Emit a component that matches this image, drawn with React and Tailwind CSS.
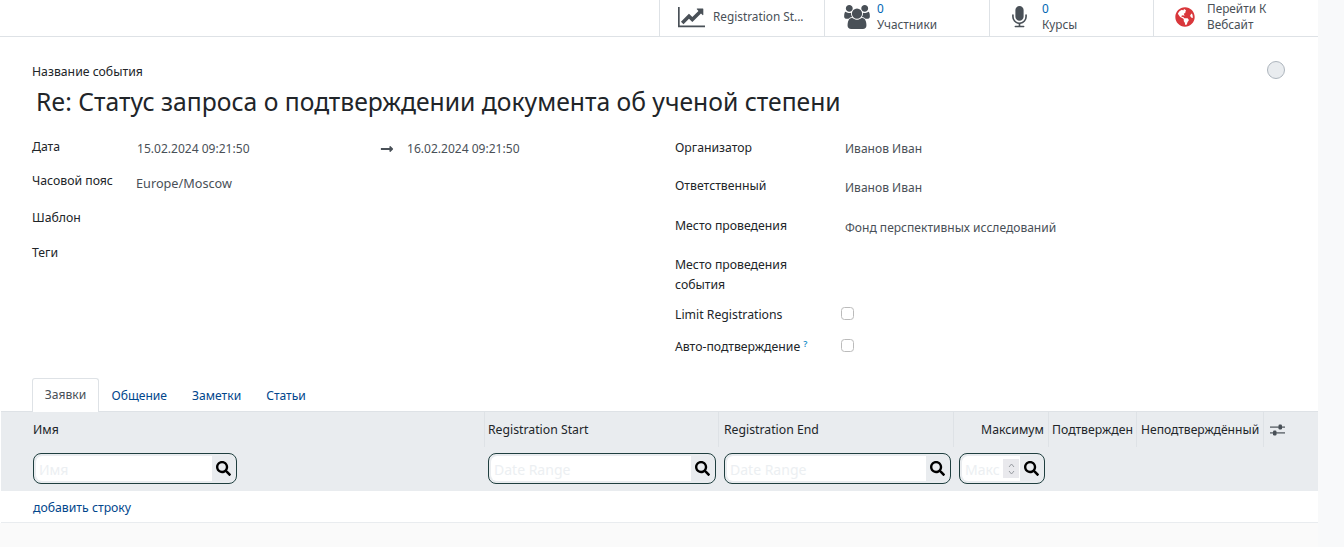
import React from "react";
import { FaSearch, FaGlobeAmericas, FaLongArrowAltRight } from "react-icons/fa";

const ChartIcon = () => (
  <svg width="27" height="24" viewBox="0 0 2048 1792" fill="currentColor">
    <path d="M2048 1536v128h-2048v-1536h128v1408h1920zm-128-1248v435q0 21-19.5 29.5t-35.5-7.5l-121-121-633 633q-10 10-23 10t-23-10l-233-233-416 416-192-192 585-585q10-10 23-10t23 10l233 233 464-464-121-121q-16-16-7.5-35.5t29.5-19.5h435q14 0 23 9t9 23z" />
  </svg>
);
const UsersIcon = () => (
  <svg width="26" height="24" viewBox="0 0 1920 1792" fill="currentColor">
    <path d="M593 896q-162 5-265 128h-134q-82 0-138-40.5t-56-118.5q0-353 124-353 6 0 43.5 21t97.5 42.5 119 21.5q67 0 133-23-5 37-5 66 0 139 81 256zm1071 637q0 120-73 189.5t-194 69.5h-874q-121 0-194-69.5t-73-189.5q0-53 3.5-103.5t14-109 26.5-108.5 43-97.5 62-81 85.5-53.5 111.5-20q10 0 43 21.5t73 48 107 48 135 21.5 135-21.5 107-48 73-48 43-21.5q61 0 111.5 20t85.5 53.5 62 81 43 97.5 26.5 108.5 14 109 3.5 103.5zm-1024-1277q0 106-75 181t-181 75-181-75-75-181 75-181 181-75 181 75 75 181zm704 384q0 159-112.5 271.5t-271.5 112.5-271.5-112.5-112.5-271.5 112.5-271.5 271.5-112.5 271.5 112.5 112.5 271.5zm576 225q0 78-56 118.5t-138 40.5h-134q-103-123-265-128 81-117 81-256 0-29-5-66 66 23 133 23 59 0 119-21.5t97.5-42.5 43.5-21q124 0 124 353zm-128-609q0 106-75 181t-181 75-181-75-75-181 75-181 181-75 181 75 75 181z" />
  </svg>
);
const MicIcon = () => (
  <svg width="15" height="23" viewBox="0 0 1152 1792" fill="currentColor">
    <path d="M1152 704v128q0 221-147.5 384.5t-364.5 187.5v132h256q26 0 45 19t19 45-19 45-45 19h-640q-26 0-45-19t-19-45 19-45 45-19h256v-132q-217-24-364.5-187.5t-147.5-384.5v-128q0-26 19-45t45-19 45 19 19 45v128q0 185 131.5 316.5t316.5 131.5 316.5-131.5 131.5-316.5v-128q0-26 19-45t45-19 45 19 19 45zm-256-384v512q0 132-94 226t-226 94-226-94-94-226v-512q0-132 94-226t226-94 226 94 94 226z" />
  </svg>
);
const SlidersIcon = () => (
  <svg width="15" height="12" viewBox="0 0 15 12" fill="#495057">
    <rect x="0" y="2.5" width="15" height="1.2" />
    <rect x="0" y="8.3" width="15" height="1.2" />
    <rect x="8.5" y="0.5" width="3.5" height="5" rx="1.2" />
    <rect x="3" y="6.5" width="3.5" height="5" rx="1.2" />
  </svg>
);

function Stat({ w, pad, iconW, icon, value, label }) {
  return (
    <div className="h-full border-l border-[#dee2e6] flex items-center shrink-0 pb-[2px]" style={{ width: w, paddingLeft: pad }}>
      <div className="flex justify-start text-[#495057] shrink-0" style={{ width: iconW }}>{icon}</div>
      <div className="leading-[16px] text-[#495057] text-[11.8px] -translate-y-[1px]">
        {value !== undefined && <div className="text-[#0066b3]">{value}</div>}
        <div className="whitespace-pre-line">{label}</div>
      </div>
    </div>
  );
}

function Row({ h, label, labelW, labelPad = 0, children }) {
  return (
    <div className="flex items-center" style={{ height: h }}>
      <div className="text-[#212529] shrink-0" style={{ width: labelW, paddingTop: labelPad }}>{label}</div>
      <div className="text-[#495057] flex-1 text-[12.05px]">{children}</div>
    </div>
  );
}

function Filter({ w, placeholder, number }) {
  return (
    <div className="h-[31px] border border-[#1f3f3f] rounded-lg flex items-center p-[2px] bg-transparent" style={{ width: w }}>
      <div className="flex-1 h-[25px] bg-white rounded-l-md pl-[3px] text-sm leading-[25px] text-[#eceff2] overflow-hidden whitespace-nowrap flex items-center justify-between">
        <span className="pt-[1px]">{placeholder}</span>
        {number && (
          <span className="w-[16px] h-[19px] bg-[#e9e9ed] shrink-0 mr-[1px] flex flex-col items-center justify-center">
            <svg width="7" height="14" viewBox="0 0 7 14" fill="none" stroke="#8f9398" strokeWidth="0.9"><path d="M1 5l2.5-3L6 5M1 9l2.5 3L6 9" /></svg>
          </span>
        )}
      </div>
      <div className="w-[22px] flex justify-center text-black shrink-0"><FaSearch size={15} /></div>
    </div>
  );
}

export default function App() {
  return (
    <div className="w-[1344px] h-[547px] bg-[#f8f9fa] overflow-hidden text-[12.25px] font-['Noto_Sans',sans-serif]">
      <div className="w-[1318px] h-full bg-white flex flex-col">
        <div className="h-[37px] border-b border-[#dee2e6] flex justify-end">
          <Stat w={165} pad={18} iconW={35} icon={<ChartIcon />} label="Registration St..." />
          <Stat w={165} pad={19} iconW={33} icon={<UsersIcon />} value="0" label="Участники" />
          <Stat w={164} pad={22} iconW={30} icon={<MicIcon />} value="0" label="Курсы" />
          <Stat w={165} pad={21} iconW={32} icon={<FaGlobeAmericas size={20} className="text-[#d9373b]" />} label={"Перейти К\nВебсайт"} />
        </div>

        <div className="px-[32px] pt-[26px] flex-none relative">
          <div className="leading-[18px] text-[#212529]">Название события</div>
          <div className="text-[24.7px] leading-[32px] mt-[5px] ml-[4px] text-[#212529] whitespace-nowrap">Re: Статус запроса о подтверждении документа об ученой степени</div>
          <div className="absolute right-[33px] top-[24px] w-[18px] h-[18px] rounded-full bg-[#e9ecef] border border-[#adb5bd]" />

          <div className="flex mt-[11px] h-[252px]">
            <div className="w-[643px]">
              <Row h={35} label="Дата" labelW={104} labelPad={2}>
                <div className="flex items-center pt-[5px]">
                  <span className="w-[244px] pl-[1px]">15.02.2024 09:21:50</span>
                  <FaLongArrowAltRight size={14} className="text-[#495057] mr-[13px]" />
                  <span>16.02.2024 09:21:50</span>
                </div>
              </Row>
              <Row h={35} label="Часовой пояс" labelW={104}><span className="block pt-[5px] text-[12.7px]">Europe/Moscow</span></Row>
              <Row h={36} label="Шаблон" labelW={104} labelPad={2} />
              <Row h={35} label="Теги" labelW={104} labelPad={2} />
            </div>
            <div className="flex-1">
              <Row h={37} label="Организатор" labelW={170} labelPad={1}><span className="block pt-[3px]">Иванов Иван</span></Row>
              <Row h={40} label="Ответственный" labelW={170}><span className="block pt-[5px]">Иванов Иван</span></Row>
              <Row h={40} label="Место проведения" labelW={170}><span className="block pt-[5px]">Фонд перспективных исследований</span></Row>
              <Row h={54} label={<span className="block leading-[20px] w-[130px] pt-[3px]">Место проведения события</span>} labelW={170} />
              <Row h={29} label="Limit Registrations" labelW={170} labelPad={2}>
                <div className="w-[13px] h-[13px] border border-[#bbb] rounded-[3.5px] mt-[-2px] ml-[-4px]" />
              </Row>
              <Row h={35} label={<span>Авто-подтверждение <sup className="text-[#1a8fc9] text-[9px] font-semibold">?</sup></span>} labelW={170} labelPad={2}>
                <div className="w-[13px] h-[13px] border border-[#bbb] rounded-[3.5px] mt-[-2px] ml-[-4px]" />
              </Row>
            </div>
          </div>

          <div className="flex items-end h-[32px] -mt-[2px] text-[12.1px]">
            <div className="w-[67px] h-[34px] border border-b-0 border-[#dee2e6] rounded-t-[3px] bg-white flex items-center justify-center text-[#495057] relative z-10 translate-y-[1px]">Заявки</div>
            <div className="px-[12.5px] h-[32px] pt-[2px] flex items-center text-[#01468c]">Общение</div>
            <div className="px-[12.5px] h-[32px] pt-[2px] flex items-center text-[#01468c]">Заметки</div>
            <div className="px-[12.5px] h-[32px] pt-[2px] flex items-center text-[#01468c]">Статьи</div>
          </div>
        </div>

        <div className="bg-[#e9ecef] border-t border-[#dee2e6] ml-[1px]">
          <div className="grid grid-cols-[484px_234px_235px_95px_88px_127px_54px] h-[35px] text-[#212529]">
            <div className="pl-[32px] pt-[2px] flex items-center border-r border-[#dee2e6]">Имя</div>
            <div className="pl-[3px] pt-[2px] flex items-center border-r border-[#dee2e6]">Registration Start</div>
            <div className="pl-[5px] pt-[2px] flex items-center border-r border-[#dee2e6]">Registration End</div>
            <div className="pr-[4px] pt-[2px] flex items-center justify-end border-r border-[#dee2e6]">Максимум</div>
            <div className="pt-[2px] flex items-center justify-center border-r border-[#dee2e6]">Подтвержден</div>
            <div className="pl-[4px] pt-[2px] flex items-center border-r border-[#dee2e6] whitespace-nowrap text-[12.1px]">Неподтверждённый</div>
            <div className="pl-[6px] flex items-center"><SlidersIcon /></div>
          </div>
          <div className="h-[44px] flex items-start pt-[6px] pl-[32px]">
            <Filter w={204} placeholder="Имя" />
            <div className="w-[251px]" />
            <Filter w={228} placeholder="Date Range" />
            <div className="w-[8px]" />
            <Filter w={227} placeholder="Date Range" />
            <div className="w-[8px]" />
            <Filter w={86} placeholder="Макс" number />
          </div>
        </div>
        <div className="h-[32px] border-b border-[#e9ecef] pl-[32px] pt-[3px] flex items-center text-[#01468c] ml-[1px]">добавить строку</div>
        <div className="flex-1 bg-[#fafafa]" />
      </div>
    </div>
  );
}
